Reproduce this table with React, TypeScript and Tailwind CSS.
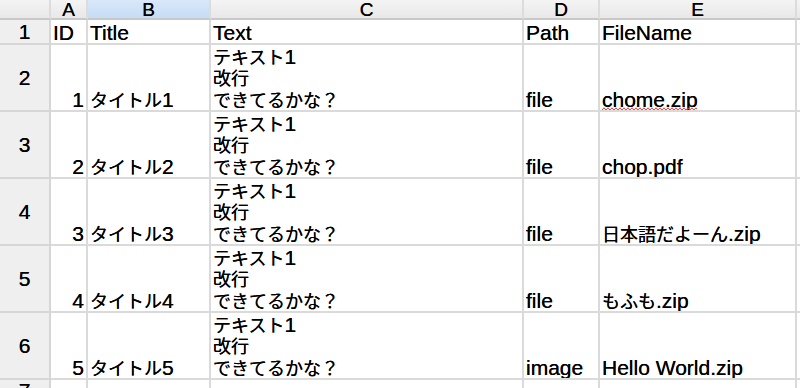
import React from "react";

const rows = [
  { id: "1", title: "タイトル1", path: "file", file: "chome.zip", wavy: true },
  { id: "2", title: "タイトル2", path: "file", file: "chop.pdf" },
  { id: "3", title: "タイトル3", path: "file", file: "日本語だよーん.zip" },
  { id: "4", title: "タイトル4", path: "file", file: "もふも.zip" },
  { id: "5", title: "タイトル5", path: "image", file: "Hello World.zip" },
];

const font = { fontFamily: '"Liberation Sans", "Noto Sans CJK JP", sans-serif' };

const CJK = /[\u3000-\u30ff\u4e00-\u9fff\uff00-\uffef]/;

function T({ s }: { s: string }) {
  const parts = s.split(/([\u3000-\u30ff\u4e00-\u9fff\uff00-\uffef]+)/).filter((p) => p.length > 0);
  return (
    <div className="h-[21.5px] leading-[21.5px]">
      {parts.map((p, i) =>
        CJK.test(p) ? (
          <span key={i} className="text-[18px] leading-none">
            {p}
          </span>
        ) : (
          <span key={i} className="leading-none">
            {p}
          </span>
        )
      )}
    </div>
  );
}

function Wavy({ width }: { width: number }) {
  const segs: string[] = [];
  for (let x = 0; x < width; x += 4) {
    segs.push(`L${x + 2} 0.8 L${x + 4} 3.2`);
  }
  return (
    <svg
      className="absolute left-0 bottom-[-1px] pointer-events-none"
      width={width}
      height={4}
      viewBox={`0 0 ${width} 4`}
    >
      <path d={`M0 3.2 ${segs.join(" ")}`} fill="none" stroke="#e8403a" strokeWidth={1} />
    </svg>
  );
}

function Head({ children, active }: { children?: React.ReactNode; active?: boolean }) {
  return (
    <div
      className={
        "flex items-center justify-center border-r-2 border-b-2 border-r-[#dcdcdc] border-b-[#c8c8c8] text-[19px] leading-none " +
        (active ? "bg-gradient-to-b from-[#d9e8fa] to-[#c6dcf5]" : "bg-gradient-to-b from-[#f4f4f4] to-[#e8e8e8]")
      }
    >
      {children}
    </div>
  );
}

function RowHead({ children }: { children?: React.ReactNode }) {
  return (
    <div className="flex items-center justify-center border-r-2 border-b-2 border-[#d6d6d6] bg-[#efefef] text-[21px] leading-none">
      {children}
    </div>
  );
}

function Cell({ children, right }: { children?: React.ReactNode; right?: boolean }) {
  return (
    <div
      className={
        "flex flex-col justify-end border-r-2 border-b-2 border-[#dadada] bg-white px-[2px] text-[21px] leading-[21.5px] whitespace-nowrap overflow-hidden " +
        (right ? "items-end" : "items-start")
      }
    >
      {children}
    </div>
  );
}

export default function App() {
  return (
    <div
      className="w-[800px] h-[388px] overflow-hidden bg-white text-black [text-shadow:0_0_0.35px_#000]"
      style={font}
    >
      <div className="grid grid-cols-[51px_37px_123px_313px_76px_197px_1fr] grid-rows-[20px_25px_67px_67px_67px_67px_67px_1fr] h-[388px]">
        <Head />
        <Head>A</Head>
        <Head active>B</Head>
        <Head>C</Head>
        <Head>D</Head>
        <Head>E</Head>
        <Head />

        <RowHead>1</RowHead>
        <Cell>ID</Cell>
        <Cell>Title</Cell>
        <Cell>Text</Cell>
        <Cell>Path</Cell>
        <Cell>FileName</Cell>
        <Cell />

        {rows.map((r, i) => (
          <React.Fragment key={r.id}>
            <RowHead>{i + 2}</RowHead>
            <Cell right>{r.id}</Cell>
            <Cell>
              <T s={r.title} />
            </Cell>
            <Cell>
              <T s="テキスト1" />
              <T s="改行" />
              <T s="できてるかな？" />
            </Cell>
            <Cell>{r.path}</Cell>
            <Cell>
              {r.wavy ? (
                <div className="relative h-[21.5px] leading-[21.5px]">
                  {r.file}
                  <Wavy width={95} />
                </div>
              ) : (
                <T s={r.file} />
              )}
            </Cell>
            <Cell />
          </React.Fragment>
        ))}

        <RowHead>7</RowHead>
        <Cell />
        <Cell />
        <Cell />
        <Cell />
        <Cell />
        <Cell />
      </div>
    </div>
  );
}
